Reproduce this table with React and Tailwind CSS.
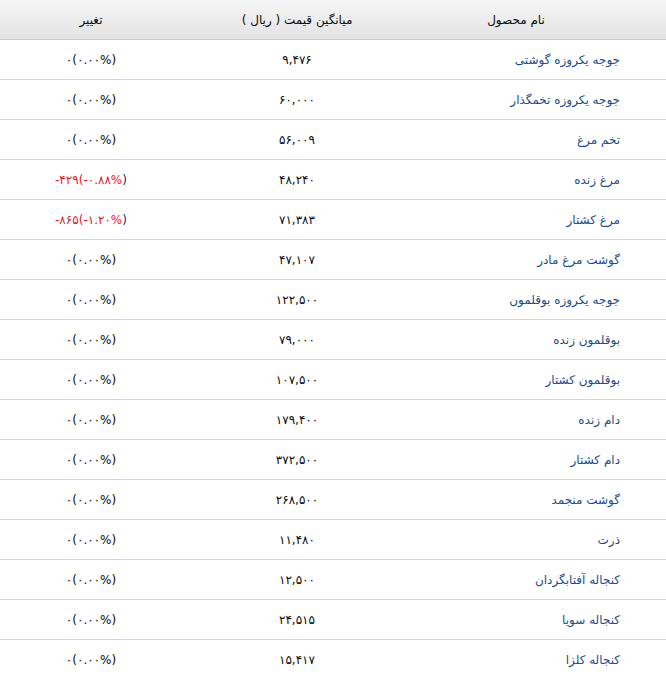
import React from "react";

const rows = [
  ["جوجه یکروزه گوشتی", "۹,۴۷۶", null],
  ["جوجه یکروزه تخمگذار", "۶۰,۰۰۰", null],
  ["تخم مرغ", "۵۶,۰۰۹", null],
  ["مرغ زنده", "۴۸,۲۴۰", ["-۴۲۹", "-۰.۸۸%"]],
  ["مرغ کشتار", "۷۱,۳۸۳", ["-۸۶۵", "-۱.۲۰%"]],
  ["گوشت مرغ مادر", "۴۷,۱۰۷", null],
  ["جوجه یکروزه بوقلمون", "۱۲۲,۵۰۰", null],
  ["بوقلمون زنده", "۷۹,۰۰۰", null],
  ["بوقلمون کشتار", "۱۰۷,۵۰۰", null],
  ["دام زنده", "۱۷۹,۴۰۰", null],
  ["دام کشتار", "۳۷۲,۵۰۰", null],
  ["گوشت منجمد", "۲۶۸,۵۰۰", null],
  ["ذرت", "۱۱,۴۸۰", null],
  ["کنجاله آفتابگردان", "۱۲,۵۰۰", null],
  ["کنجاله سویا", "۲۴,۵۱۵", null],
  ["کنجاله کلزا", "۱۵,۴۱۷", null],
];

export default function App() {
  return (
    <div
      dir="rtl"
      className="w-[666px] h-[676px] overflow-hidden bg-white text-[12px] text-[#0a0a0a]"
      style={{ fontFamily: '"DejaVu Sans", Tahoma, sans-serif' }}
    >
      <div className="grid grid-cols-[254px_230px_182px] h-[40px] items-center border-b border-[#cccccc] bg-gradient-to-b from-[#f6f6f6] to-[#e3e3e3]">
        <div className="pr-[46px] text-center">نام محصول</div>
        <div className="text-center">میانگین قیمت ( ریال )</div>
        <div className="text-center">تغییر</div>
      </div>
      {rows.map(([name, price, ch], i) => (
        <div
          key={i}
          className="grid grid-cols-[254px_230px_182px] h-[40px] items-center border-b border-[#d6d6d6]"
        >
          <div className="pr-[46px] text-right text-[#1a4c8a]">{name}</div>
          <div className="text-center">
            <span dir="ltr">{price}</span>
          </div>
          <div className="text-center">
            {ch ? (
              <span dir="ltr" className="text-[#e0192a]">
                {ch[0]}({ch[1]}<span className="text-[#1c2f5a]">)</span>
              </span>
            ) : (
              <span dir="ltr">۰(۰.۰۰%)</span>
            )}
          </div>
        </div>
      ))}
    </div>
  );
}
